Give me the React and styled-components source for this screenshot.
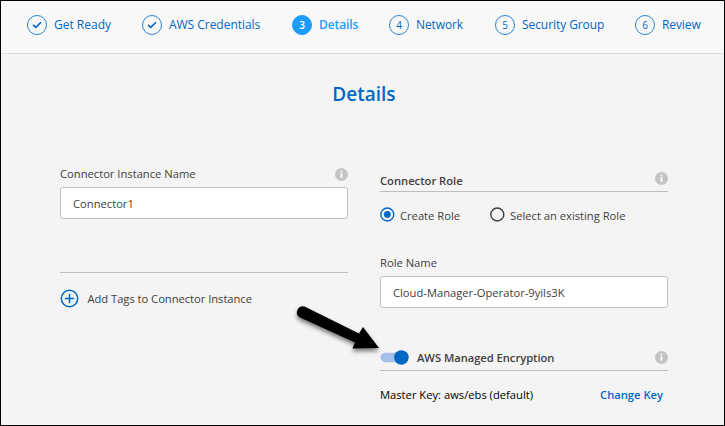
import React from "react";
import styled, { createGlobalStyle } from "styled-components";

const Global = createGlobalStyle`
  *, *::before, *::after { box-sizing: border-box; }
  body { margin: 0; font-family: "Open Sans", sans-serif; }
`;

const Frame = styled.div`
  position: relative;
  width: 725px;
  height: 426px;
  border: 1px solid #000;
  background: #f4f4f4;
  color: #404040;
  font-size: 11.2px;
  line-height: 16px;
  white-space: nowrap;
  overflow: hidden;
`;

const Stepper = styled.nav`
  display: grid;
  grid-template-columns: 115px 150px 97px 106px 140px 80px;
  align-items: center;
  height: 53px;
  padding: 0 0 4px 26px;
  background: #f8f8f8;
  border-bottom: 1px solid #dcdcdc;
`;

const Step = styled.div`
  display: flex;
  align-items: center;
  gap: 7px;
  font-size: 12px;
  font-weight: ${(p) => (p.$active ? 600 : 400)};
  color: ${(p) => (p.$active ? "#1e9bff" : "#0067c5")};
  letter-spacing: ${(p) => p.$spacing || 0}px;
`;

const StepMark = styled.span`
  display: flex;
  align-items: center;
  justify-content: center;
  flex: none;
  width: 20px;
  height: 20px;
  border: 1px solid ${(p) => (p.$active ? "#1e9bff" : "#2a82d2")};
  border-radius: 50%;
  background: ${(p) => (p.$active ? "#1e9bff" : "transparent")};
  color: ${(p) => (p.$active ? "#fff" : "#0067c5")};
  font-size: 10px;
  letter-spacing: 0;
`;

const Title = styled.h1`
  margin: 26px 0 0;
  padding-left: 3px;
  text-align: center;
  font-size: 19px;
  line-height: 28px;
  font-weight: 600;
  color: #0067c5;
`;

const Columns = styled.main`
  display: grid;
  grid-template-columns: 288px 288px;
  column-gap: 32px;
  padding-left: 59px;
`;

const Column = styled.section`
  display: flex;
  flex-direction: column;
  padding-top: ${(p) => p.$top}px;
`;

const LabelRow = styled.div`
  display: flex;
  align-items: center;
  justify-content: space-between;
  height: 16px;
`;

const Text = styled.span`
  font-weight: ${(p) => (p.$bold ? 600 : 400)};
  letter-spacing: ${(p) => p.$spacing || 0}px;
`;

const Input = styled.input`
  width: 288px;
  height: 32px;
  margin-top: ${(p) => p.$top}px;
  padding: 0 12px;
  border: 1px solid #c2c2c2;
  border-radius: 3px;
  background: #fff;
  color: #404040;
  font: 11.2px "Open Sans", sans-serif;
  outline: none;
`;

const Divider = styled.hr`
  width: 100%;
  height: 1px;
  margin: ${(p) => p.$top}px 0 0;
  border: 0;
  background: #bebebe;
`;

const AddTags = styled.div`
  display: flex;
  align-items: center;
  gap: 8.5px;
  margin-top: 15px;
  height: 21px;
`;

const SectionHead = styled.div`
  display: flex;
  align-items: flex-end;
  height: 22px;
  padding-bottom: ${(p) => p.$bottom}px;
  margin-top: ${(p) => p.$top || 0}px;
  border-bottom: 1px solid #bebebe;
`;

const HeadIcon = styled.span`
  display: flex;
  margin-left: auto;
  padding-bottom: ${(p) => p.$bottom}px;
`;

const Radios = styled.div`
  display: grid;
  grid-template-columns: 110px auto;
  margin-top: 14px;
  height: 18px;
`;

const RadioOption = styled.label`
  display: flex;
  align-items: flex-end;
  gap: 5px;
`;

const RadioIcon = styled.svg`
  flex: none;
  margin-bottom: 2px;
  color: ${(p) => (p.$on ? "#0067c5" : "#404040")};
`;

const FieldLabel = styled.label`
  display: block;
  height: 16px;
  margin-top: 31px;
`;

const Toggle = styled.svg`
  display: block;
  margin: 0 8px 1px 0;
`;

const KeyRow = styled.div`
  display: flex;
  justify-content: space-between;
  margin-top: 16px;
  padding-right: 5px;
  color: #000;
`;

const KeyLink = styled.a`
  color: #0067c5;
  font-weight: 600;
`;

const Pointer = styled.svg`
  position: absolute;
  left: 285px;
  top: 295px;
`;

const Check = () => (
  <svg width="10" height="8" viewBox="0 0 10 8" fill="none" stroke="#0067c5" strokeWidth="1.6">
    <path d="M1 3.8 3.8 6.4 9 1.2" />
  </svg>
);

const Info = () => (
  <svg width="13" height="13" viewBox="0 0 13 13">
    <circle cx="6.5" cy="6.5" r="6.5" fill="#c4c4c4" />
    <path d="M5.5 5.3h1.8v4.5H5.5zM5.5 2.7h1.8v1.6H5.5z" fill="#fff" />
  </svg>
);

const Plus = () => (
  <svg width="19" height="19" viewBox="0 0 19 19" fill="none" stroke="#0067c5" strokeWidth="1.5">
    <circle cx="9.5" cy="9.5" r="8.2" />
    <path d="M9.5 4.8v9.4M4.8 9.5h9.4" />
  </svg>
);

const Radio = ({ on }) => (
  <RadioIcon $on={on} width="15" height="15" viewBox="0 0 15 15">
    <circle cx="7.3" cy="7.5" r="6.5" fill="none" stroke="currentColor" strokeWidth="1.4" />
    {on && <circle cx="7.3" cy="7.5" r="3.4" fill="currentColor" />}
  </RadioIcon>
);

const steps = [
  { label: "Get Ready", done: true },
  { label: "AWS Credentials", done: true, spacing: -0.03 },
  { label: "Details", active: true, spacing: -0.1 },
  { label: "Network", spacing: -0.1 },
  { label: "Security Group", spacing: -0.07 },
  { label: "Review", spacing: -0.1 },
];

export default function App() {
  return (
    <Frame>
      <Global />
      <Stepper>
        {steps.map((s, i) => (
          <Step key={s.label} $active={s.active} $spacing={s.spacing}>
            <StepMark $active={s.active}>{s.done ? <Check /> : i + 1}</StepMark>
            {s.label}
          </Step>
        ))}
      </Stepper>
      <Title>Details</Title>
      <Columns>
        <Column $top={58}>
          <LabelRow>
            <Text>Connector Instance Name</Text>
            <Info />
          </LabelRow>
          <Input $top={5} defaultValue="Connector1" />
          <Divider $top={53} />
          <AddTags>
            <Plus />
            <Text $spacing={-0.03}>Add Tags to Connector Instance</Text>
          </AddTags>
        </Column>
        <Column $top={62}>
          <SectionHead $bottom={2}>
            <Text $bold>Connector Role</Text>
            <HeadIcon $bottom={4}><Info /></HeadIcon>
          </SectionHead>
          <Radios>
            <RadioOption><Radio on /><Text>Create Role</Text></RadioOption>
            <RadioOption><Radio /><Text>Select an existing Role</Text></RadioOption>
          </Radios>
          <FieldLabel><Text>Role Name</Text></FieldLabel>
          <Input $top={5} defaultValue="Cloud-Manager-Operator-9yils3K" />
          <SectionHead $top={41} $bottom={4}>
            <Toggle width="29" height="15" viewBox="0 0 29 15">
              <rect x="0.5" y="2.8" width="22" height="9.4" rx="4.7" fill="#a5c0e8" />
              <circle cx="21.4" cy="7.5" r="7.3" fill="#0067c5" />
            </Toggle>
            <Text $bold $spacing={-0.03}>AWS Managed Encryption</Text>
            <HeadIcon $bottom={2}><Info /></HeadIcon>
          </SectionHead>
          <KeyRow>
            <Text>Master Key: aws/ebs (default)</Text>
            <KeyLink>Change Key</KeyLink>
          </KeyRow>
        </Column>
      </Columns>
      <Pointer width="110" height="70" viewBox="286 296 110 70">
        <defs>
          <filter id="soft" x="-20%" y="-20%" width="140%" height="150%">
            <feDropShadow dx="0" dy="3" stdDeviation="2" floodColor="#000" floodOpacity="0.5" />
          </filter>
        </defs>
        <path
          d="M304.5 306.5 359 333.5 363 327 379 348 352.5 348.5 355 342.5 299.5 317.2A6 6 0 0 1 304.5 306.5Z"
          fill="#000"
          filter="url(#soft)"
        />
      </Pointer>
    </Frame>
  );
}
